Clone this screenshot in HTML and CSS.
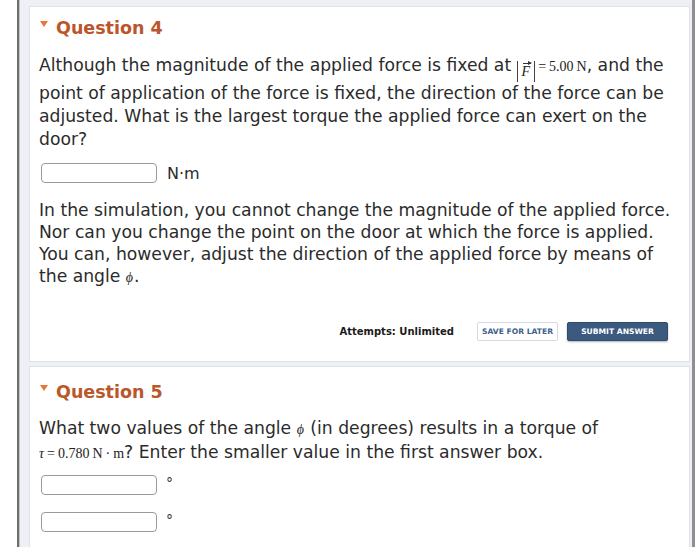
FILE: index.html
```html
<!DOCTYPE html>
<html>
<head>
<meta charset="utf-8">
<link rel="stylesheet" href="styles.css">
</head>
<body>
<div class="frame">
  <section class="card card-q4">
    <h2 class="qhead"><span class="tri"></span>Question 4</h2>
    <p class="text first">Although the magnitude of the applied force is fixed at <span class="math"><span class="abs"><span class="vec">F</span></span><span class="eq">=</span>5.00<span class="unit">N</span></span>, and the point of application of the force is fixed, the direction of the force can be adjusted. What is the largest torque the applied force can exert on the door?</p>
    <div class="answer"><span class="box"></span><span class="unitlabel">N·m</span></div>
    <p class="text second">In the simulation, you cannot change the magnitude of the applied force. Nor can you change the point on the door at which the force is applied. You can, however, adjust the direction of the applied force by means of the angle <span class="phi">ϕ</span>.</p>
    <div class="actions">
      <span class="attempts">Attempts: Unlimited</span>
      <span class="btn save">SAVE FOR LATER</span>
      <span class="btn submit">SUBMIT ANSWER</span>
    </div>
  </section>
  <section class="card card-q5">
    <h2 class="qhead"><span class="tri"></span>Question 5</h2>
    <p class="text">What two values of the angle <span class="phi">ϕ</span> (in degrees) results in a torque of <span class="math"><span class="tau">τ</span><span class="eq">=</span>0.780<span class="unit">N</span><span class="dot">·</span><span class="unit m">m</span></span>? Enter the smaller value in the first answer box.</p>
    <div class="answer deg"><span class="box"></span><span class="degree">°</span></div>
    <div class="answer deg"><span class="box"></span><span class="degree">°</span></div>
  </section>
</div>
</body>
</html>
```
FILE: styles.css
```css
html, body {
  margin: 0;
  padding: 0;
  background: #ffffff;
}
body {
  font-family: "DejaVu Sans", Verdana, sans-serif;
  color: #222;
}
.frame {
  margin-left: 17px;
  width: 661px;
  height: 547px;
  overflow: hidden;
  background: #eef0f5;
  border-left: 2px solid #6e6e6e;
  border-right: 3px solid #8f8f8f;
  box-shadow: inset 1px 0 0 #c4c4c4;
  padding: 6px 2px 0 10px;
  box-sizing: content-box;
  display: flex;
  flex-direction: column;
  gap: 4px;
}
.card {
  background: #fff;
  border: 1px solid #dde1e9;
  padding: 0 6px 0 9px;
  flex-shrink: 0;
}
.card-q4 { height: 354px; }
.card-q5 { flex: 1; }
.qhead {
  margin: 0;
  font-size: 17.5px;
  font-weight: bold;
  color: #bb562b;
  display: flex;
  align-items: center;
  height: 26px;
  margin-top: 8px;
}
.tri {
  width: 0;
  height: 0;
  border-left: 4.5px solid transparent;
  border-right: 4.5px solid transparent;
  border-top: 6px solid #e8763c;
  margin: 0 8px 0 1px;
  position: relative;
  top: -4px;
}
.text {
  margin: 0;
  font-size: 17.2px;
  line-height: 23px;
  color: #2b2b2b;
}
.text.first { margin-top: 13px; }
.math {
  font-family: "Liberation Serif", "Times New Roman", serif;
  font-size: 14px;
  color: #222;
  white-space: nowrap;
}
.abs {
  display: inline-block;
  border-left: 1px solid #444;
  border-right: 1px solid #444;
  padding: 0 3px;
  line-height: 21px;
  vertical-align: -5px;
  font-style: italic;
}
.vec {
  position: relative;
  display: inline-block;
  padding: 0 1px;
}
.vec::before {
  content: "";
  position: absolute;
  left: 2px;
  right: 0px;
  top: 2px;
  border-top: 1px solid #333;
}
.vec::after {
  content: "";
  position: absolute;
  right: -1px;
  top: 0px;
  border-left: 4px solid #333;
  border-top: 2.5px solid transparent;
  border-bottom: 2.5px solid transparent;
}
.eq { margin: 0 3px; }
.unit { margin-left: 3px; }
.dot { margin: 0 3px; }
.unit.m { margin-left: 0; }
.tau, .phi {
  font-family: "Liberation Serif", "Times New Roman", serif;
  font-style: italic;
  font-size: 14px;
}
.phi { margin-right: 1px; }
.answer {
  display: flex;
  align-items: center;
  margin-top: 12px;
  margin-left: 2px;
  height: 20px;
}
.box {
  width: 114px;
  height: 18px;
  border: 1px solid #9a9a9a;
  border-radius: 4px;
  background: #fff;
}
.unitlabel {
  font-size: 16px;
  margin-left: 10px;
  color: #2b2b2b;
}
.degree {
  font-size: 14px;
  margin-left: 9px;
  position: relative;
  top: -2px;
  color: #333;
}
.text.second {
  margin-top: 16px;
  line-height: 22px;
}
.actions {
  display: flex;
  justify-content: flex-end;
  align-items: center;
  gap: 9px;
  margin-top: 33px;
  margin-right: 15px;
}
.attempts {
  font-size: 10px;
  font-weight: bold;
  color: #1b1b1b;
  margin-right: 14px;
}
.btn {
  font-size: 7.6px;
  font-weight: bold;
  height: 19px;
  display: flex;
  align-items: center;
  justify-content: center;
  box-sizing: border-box;
  border-radius: 2px;
}
.save {
  width: 81px;
  color: #3f5f8e;
  background: #fff;
  border: 1px solid #d5dbe6;
}
.submit {
  width: 101px;
  color: #fff;
  background: #3c5a80;
  border: 1px solid #2f4b6e;
  box-shadow: 0 1px 2px rgba(0,0,0,0.3);
}
.card-q5 .qhead { margin-top: 12px; }
.card-q5 .text { margin-top: 12px; }
.answer.deg { margin-top: 10px; }
.answer.deg + .answer.deg { margin-top: 17px; }
```
